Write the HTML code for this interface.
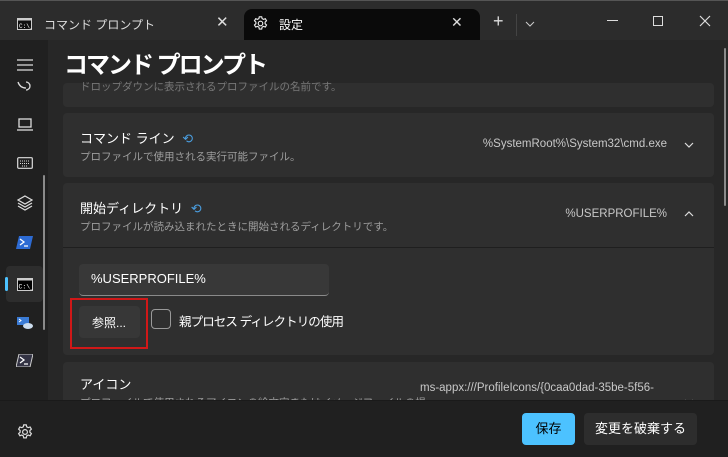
<!DOCTYPE html>
<html><head><meta charset="utf-8"><style>
*{margin:0;padding:0;box-sizing:border-box}
body{width:728px;height:457px;overflow:hidden;background:#272727;font-family:"Liberation Sans","Noto Sans CJK JP",sans-serif;color:#fff;position:relative}
.a{position:absolute}
.card{position:absolute;left:63px;width:651px;background:#2f2f2f;border-radius:4px}
.t{font-size:13px;color:#fff}
.s{font-size:10.5px;color:#9e9e9e}
.v{font-size:11.5px;color:#c8c8c8}
.h{position:absolute;left:64px;top:45px;font-size:24px;font-weight:bold;letter-spacing:-2px;white-space:nowrap}
</style></head><body>
<!-- title bar -->
<div class="a" style="left:0;top:0;width:728px;height:40px;background:#2c2c2c;border-top:1px solid #555"></div>
<div class="a" style="left:244px;top:9px;width:236px;height:32px;background:#0a0a0a;border-radius:8px 8px 0 0"></div>
<svg class="a" style="left:17px;top:18px" width="15" height="12"><rect x="0.5" y="0.5" width="14" height="11" fill="#111" stroke="#ccc"/><rect x="0.5" y="0.5" width="14" height="2" fill="#ccc"/><text x="2" y="10" font-size="6" fill="#fff" font-family="Liberation Mono">C:\_</text></svg>
<div class="a" style="left:44px;top:16px;font-size:12px;color:#ddd">コマンド プロンプト</div>
<div class="a" style="left:216px;top:13px;font-size:15px;color:#ddd">✕</div>
<svg class="a" style="left:252px;top:15px" width="17" height="17" viewBox="0 0 24 24" fill="none" stroke="#eee" stroke-width="1.6"><circle cx="12" cy="12" r="3.2"/><path d="M10.3 2.5h3.4l.6 2.6 2 1.1 2.5-.9 1.7 2.9-2 1.8v2.3l2 1.8-1.7 2.9-2.5-.9-2 1.1-.6 2.6h-3.4l-.6-2.6-2-1.1-2.5.9-1.7-2.9 2-1.8v-2.3l-2-1.8 1.7-2.9 2.5.9 2-1.1z"/></svg>
<div class="a" style="left:279px;top:16px;font-size:12px;color:#fff">設定</div>
<div class="a" style="left:451px;top:14px;font-size:14px;color:#ddd">✕</div>
<div class="a" style="left:493px;top:11px;font-size:18px;color:#ddd;font-weight:300">+</div>
<div class="a" style="left:516px;top:14px;width:1px;height:22px;background:#444"></div>
<svg class="a" style="left:525px;top:21px" width="10" height="6"><path d="M1 1l4 4 4-4" stroke="#ccc" fill="none"/></svg>
<div class="a" style="left:607px;top:20px;width:11px;height:1px;background:#ddd"></div>
<div class="a" style="left:653px;top:16px;width:10px;height:10px;border:1px solid #ddd"></div>
<svg class="a" style="left:699px;top:15px" width="12" height="12"><path d="M1 1l10 10M11 1L1 11" stroke="#ddd" stroke-width="1.2"/></svg>
<!-- sidebar -->
<div class="a" style="left:0;top:40px;width:48px;height:417px;background:#202020"></div>
<svg class="a" style="left:17px;top:59px" width="16" height="12"><path d="M0 1h16M0 6h16M0 11h16" stroke="#ddd" stroke-width="1.2"/></svg>
<svg class="a" style="left:17px;top:80px" width="16" height="12"><path d="M1 2c1 3 3 6 8 6M9 2a4 4 0 1 1 0 8" stroke="#ddd" fill="none" stroke-width="1.3"/></svg>
<svg class="a" style="left:17px;top:118px" width="16" height="13"><rect x="2" y="1" width="12" height="8" fill="none" stroke="#ddd" stroke-width="1.3"/><path d="M0 12h16" stroke="#ddd" stroke-width="1.3"/></svg>
<svg class="a" style="left:17px;top:157px" width="16" height="12"><rect x="0.7" y="0.7" width="14.6" height="10.6" rx="1" fill="none" stroke="#ddd" stroke-width="1.2"/><path d="M3 4h10M3 6.5h10M5 9h6" stroke="#ddd" stroke-dasharray="1 1"/></svg>
<svg class="a" style="left:17px;top:195px" width="16" height="16"><path d="M8 1l7 4-7 4-7-4zM1 8l7 4 7-4M1 11l7 4 7-4" stroke="#ddd" fill="none" stroke-width="1.2"/></svg>
<svg class="a" style="left:16px;top:236px" width="17" height="13"><path d="M3 0h14l-3 13H0z" fill="#2d6bd3"/><path d="M4 3l4 3-4 3M8 10h4" stroke="#fff" stroke-width="1.3" fill="none"/></svg>
<div class="a" style="left:6px;top:266px;width:37px;height:36px;background:#2d2d2d;border-radius:4px"></div>
<div class="a" style="left:5px;top:277px;width:3px;height:14px;background:#4cc2ff;border-radius:2px"></div>
<svg class="a" style="left:17px;top:278px" width="16" height="13"><rect x="0.5" y="0.5" width="15" height="12" fill="#000" stroke="#ccc"/><rect x="0.5" y="0.5" width="15" height="2" fill="#ccc"/><text x="1.5" y="10.5" font-size="6.5" fill="#fff" font-family="Liberation Mono">C:\_</text></svg>
<svg class="a" style="left:16px;top:316px" width="18" height="14"><rect x="1" y="1" width="12" height="8" fill="#3a7bd5"/><path d="M3 3l2 1.5-2 1.5" stroke="#fff" fill="none"/><ellipse cx="12" cy="10" rx="5" ry="3" fill="#cde"/></svg>
<svg class="a" style="left:16px;top:354px" width="17" height="13"><path d="M3 0h14l-3 13H0z" fill="#334"/><path d="M3 0h14l-3 13H0z" fill="none" stroke="#ccc"/><path d="M4 3l4 3-4 3M8 10h4" stroke="#fff" stroke-width="1.3" fill="none"/></svg>
<div class="a" style="left:43px;top:175px;width:2px;height:155px;background:#8a8a8a;border-radius:1px"></div>
<!-- card1 -->
<div class="card" style="top:83px;height:24px"><div class="a s" style="left:17px;top:-4px;color:#777">ドロップダウンに表示されるプロファイルの名前です。</div></div>
<div class="a" style="left:48px;top:40px;width:680px;height:41px;background:#272727"></div>
<div class="h">コマンド プロンプト</div>
<!-- card2 -->
<div class="card" style="top:113px;height:64px">
<div class="a t" style="left:17px;top:15px">コマンド ライン <span style="color:#4a9ee0;margin-left:4px">⟲</span></div>
<div class="a s" style="left:17px;top:36px">プロファイルで使用される実行可能ファイル。</div>
<div class="a v" style="right:47px;top:25px">%SystemRoot%\System32\cmd.exe</div>
<svg class="a" style="left:621px;top:29px" width="10" height="6"><path d="M1 1l4 4 4-4" stroke="#ddd" fill="none" stroke-width="1.2"/></svg>
</div>
<!-- card3 -->
<div class="card" style="top:183px;height:172px">
<div class="a t" style="left:17px;top:15px">開始ディレクトリ <span style="color:#4a9ee0;margin-left:4px">⟲</span></div>
<div class="a s" style="left:17px;top:36px">プロファイルが読み込まれたときに開始されるディレクトリです。</div>
<div class="a v" style="right:47px;top:25px">%USERPROFILE%</div>
<svg class="a" style="left:621px;top:28px" width="10" height="6"><path d="M1 5l4-4 4 4" stroke="#ddd" fill="none" stroke-width="1.2"/></svg>
<div class="a" style="left:0;top:64px;width:651px;height:1px;background:#1f1f1f"></div>
<div class="a" style="left:16px;top:81px;width:250px;height:32px;background:#383838;border-radius:4px;border-bottom:1px solid #8a8a8a"></div>
<div class="a" style="left:28px;top:88px;font-size:13px">%USERPROFILE%</div>
<div class="a" style="left:16px;top:123px;width:61px;height:32px;background:#373737;border-radius:4px"></div>
<div class="a" style="left:29px;top:131px;font-size:12px">参照...</div>
<div class="a" style="left:7px;top:115px;width:78px;height:51px;border:2px solid #d01818"></div>
<div class="a" style="left:88px;top:126px;width:20px;height:20px;border:1px solid #999;border-radius:4px"></div>
<div class="a" style="left:116px;top:128px;font-size:12.5px;letter-spacing:-0.9px;white-space:nowrap">親プロセス ディレクトリの使用</div>
</div>
<!-- card4 -->
<div class="card" style="top:362px;height:60px">
<div class="a t" style="left:17px;top:12px">アイコン</div>
<div class="a s" style="left:17px;top:33px">プロファイルで使用されるアイコンの絵文字またはイメージファイルの場</div>
<div class="a v" style="left:357px;top:20px;font-size:11.5px">ms-appx:///ProfileIcons/{0caa0dad-35be-5f56-</div>
<svg class="a" style="left:621px;top:37px" width="10" height="6"><path d="M1 1l4 4 4-4" stroke="#ddd" fill="none"/></svg>
</div>
<!-- scrollbar -->
<div class="a" style="left:724px;top:48px;width:2px;height:158px;background:#8a8a8a;border-radius:1px"></div>
<!-- footer -->
<div class="a" style="left:0;top:400px;width:728px;height:57px;background:#202020;border-top:1px solid #1a1a1a"></div>
<svg class="a" style="left:16px;top:423px" width="18" height="18" viewBox="0 0 24 24" fill="none" stroke="#ddd" stroke-width="1.6"><circle cx="12" cy="12" r="3.2"/><path d="M10.3 2.5h3.4l.6 2.6 2 1.1 2.5-.9 1.7 2.9-2 1.8v2.3l2 1.8-1.7 2.9-2.5-.9-2 1.1-.6 2.6h-3.4l-.6-2.6-2-1.1-2.5.9-1.7-2.9 2-1.8v-2.3l-2-1.8 1.7-2.9 2.5.9 2-1.1z"/></svg>
<div class="a" style="left:522px;top:413px;width:53px;height:32px;background:#4cc2ff;border-radius:4px;color:#000;font-size:13px;text-align:center;line-height:32px">保存</div>
<div class="a" style="left:584px;top:413px;width:113px;height:32px;background:#2d2d2d;border-radius:4px;font-size:13px;text-align:center;line-height:32px">変更を破棄する</div>
</body></html>
